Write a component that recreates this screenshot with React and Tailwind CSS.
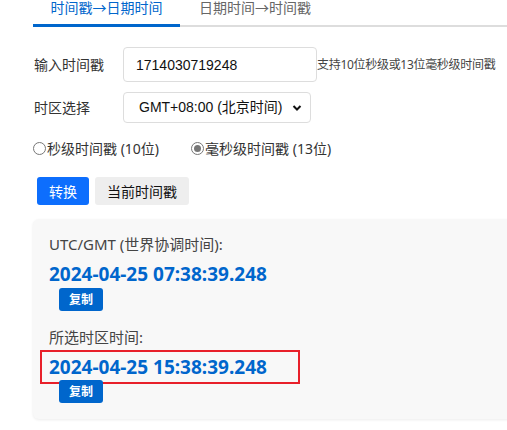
import React, { useState } from 'react';

const TZ = 'GMT+08:00 (北京时间)';

const CopyBtn = () => (
  <button className="ml-[10px] h-[23px] w-[44px] rounded-[3px] bg-[#0066cc] text-[12px] font-bold text-white">
    复制
  </button>
);

export default function App() {
  const [mode, setMode] = useState('ms');

  return (
    <div className="min-h-[430px] w-[507px] overflow-hidden bg-white pl-[33px] text-[#333] [font-family:'Noto_Sans','Noto_Sans_CJK_SC',sans-serif]">
      {/* tabs */}
      <div className="flex h-[27px] border-b-2 border-[#dddddd]">
        <div className="-mb-[2px] flex w-[147px] justify-center border-b-[3px] border-[#0066cc] pt-[1px] text-[14px] leading-[14px] text-[#0066cc]">
          时间戳→日期时间
        </div>
        <div className="flex w-[150px] justify-center pt-[1px] text-[14px] leading-[14px] text-[#666]">
          日期时间→时间戳
        </div>
      </div>

      {/* input row */}
      <div className="mt-[20px] flex items-center">
        <label className="w-[90px] pl-[1px] text-[14px]">输入时间戳</label>
        <input
          defaultValue="1714030719248"
          className="h-[35px] w-[194px] rounded-[4px] border border-[#dddddd] px-[12px] text-[14px] text-[#111] outline-none [font-family:'Liberation_Sans',sans-serif]"
        />
        <span className="text-[12px] tracking-[-0.3px] text-[#444]">支持10位秒级或13位毫秒级时间戳</span>
      </div>

      {/* timezone */}
      <div className="mt-[10px] flex items-center">
        <label className="w-[90px] pl-[1px] text-[14px]">时区选择</label>
        <div className="relative flex h-[31px] w-[188px] items-center rounded-[4px] border border-[#dddddd] pl-[15px] text-[14px] text-[#111] [font-family:'Liberation_Sans','Noto_Sans_CJK_SC',sans-serif]">
          {TZ}
          <svg className="absolute right-[8px] top-[11px]" width="10" height="8" viewBox="0 0 10 8">
            <path d="M1.5 2 L5 5.5 L8.5 2" fill="none" stroke="#111" strokeWidth="2" />
          </svg>
        </div>
      </div>

      {/* radios */}
      <div className="mt-[15px] flex items-center text-[14px] text-[#333]">
        <label className="flex items-center" onClick={() => setMode('s')}>
          <span className="flex h-[13px] w-[13px] items-center justify-center rounded-full border border-[#777] bg-white">
            {mode === 's' && <span className="h-[7px] w-[7px] rounded-full bg-[#777]" />}
          </span>
          <span className="ml-[1px]">秒级时间戳 (10位)</span>
        </label>
        <label className="ml-[32px] flex items-center" onClick={() => setMode('ms')}>
          <span className="flex h-[13px] w-[13px] items-center justify-center rounded-full border border-[#777] bg-white">
            {mode === 'ms' && <span className="h-[7px] w-[7px] rounded-full bg-[#777]" />}
          </span>
          <span className="ml-[1px]">毫秒级时间戳 (13位)</span>
        </label>
      </div>

      {/* buttons */}
      <div className="mt-[18px] flex gap-[6px] pl-[4px]">
        <button className="h-[28px] w-[52px] rounded-[3px] bg-[#0d6efd] text-[14px] text-white">转换</button>
        <button className="h-[28px] w-[94px] rounded-[3px] bg-[#eeeeee] text-[14px] text-[#111]">当前时间戳</button>
      </div>

      {/* result */}
      <div className="mt-[14px] w-[520px] rounded-[6px] bg-[#f8f8f8] pb-[16px] pl-[16px] pt-[16px] shadow-[0_1px_3px_rgba(0,0,0,0.08)]">
        <div className="text-[15px] leading-[18px] text-[#444]">UTC/GMT (世界协调时间):</div>
        <div className="mt-[10px] text-[19px] font-bold leading-[22px] text-[#0066cc]">2024-04-25 07:38:39.248</div>
        <div className="mt-[3px] flex">
          <CopyBtn />
        </div>
        <div className="mt-[17px] text-[15px] leading-[18px] text-[#444]">所选时区时间:</div>
        <div className="-ml-[9px] mt-[4px] w-[260px] border-2 border-[#e8202a] pb-[4px] pl-[7px] pt-[4px] text-[19px] font-bold leading-[22px] text-[#0066cc]">
          2024-04-25 15:38:39.248
        </div>
        <div className="-mt-[4px] flex">
          <CopyBtn />
        </div>
      </div>
    </div>
  );
}
